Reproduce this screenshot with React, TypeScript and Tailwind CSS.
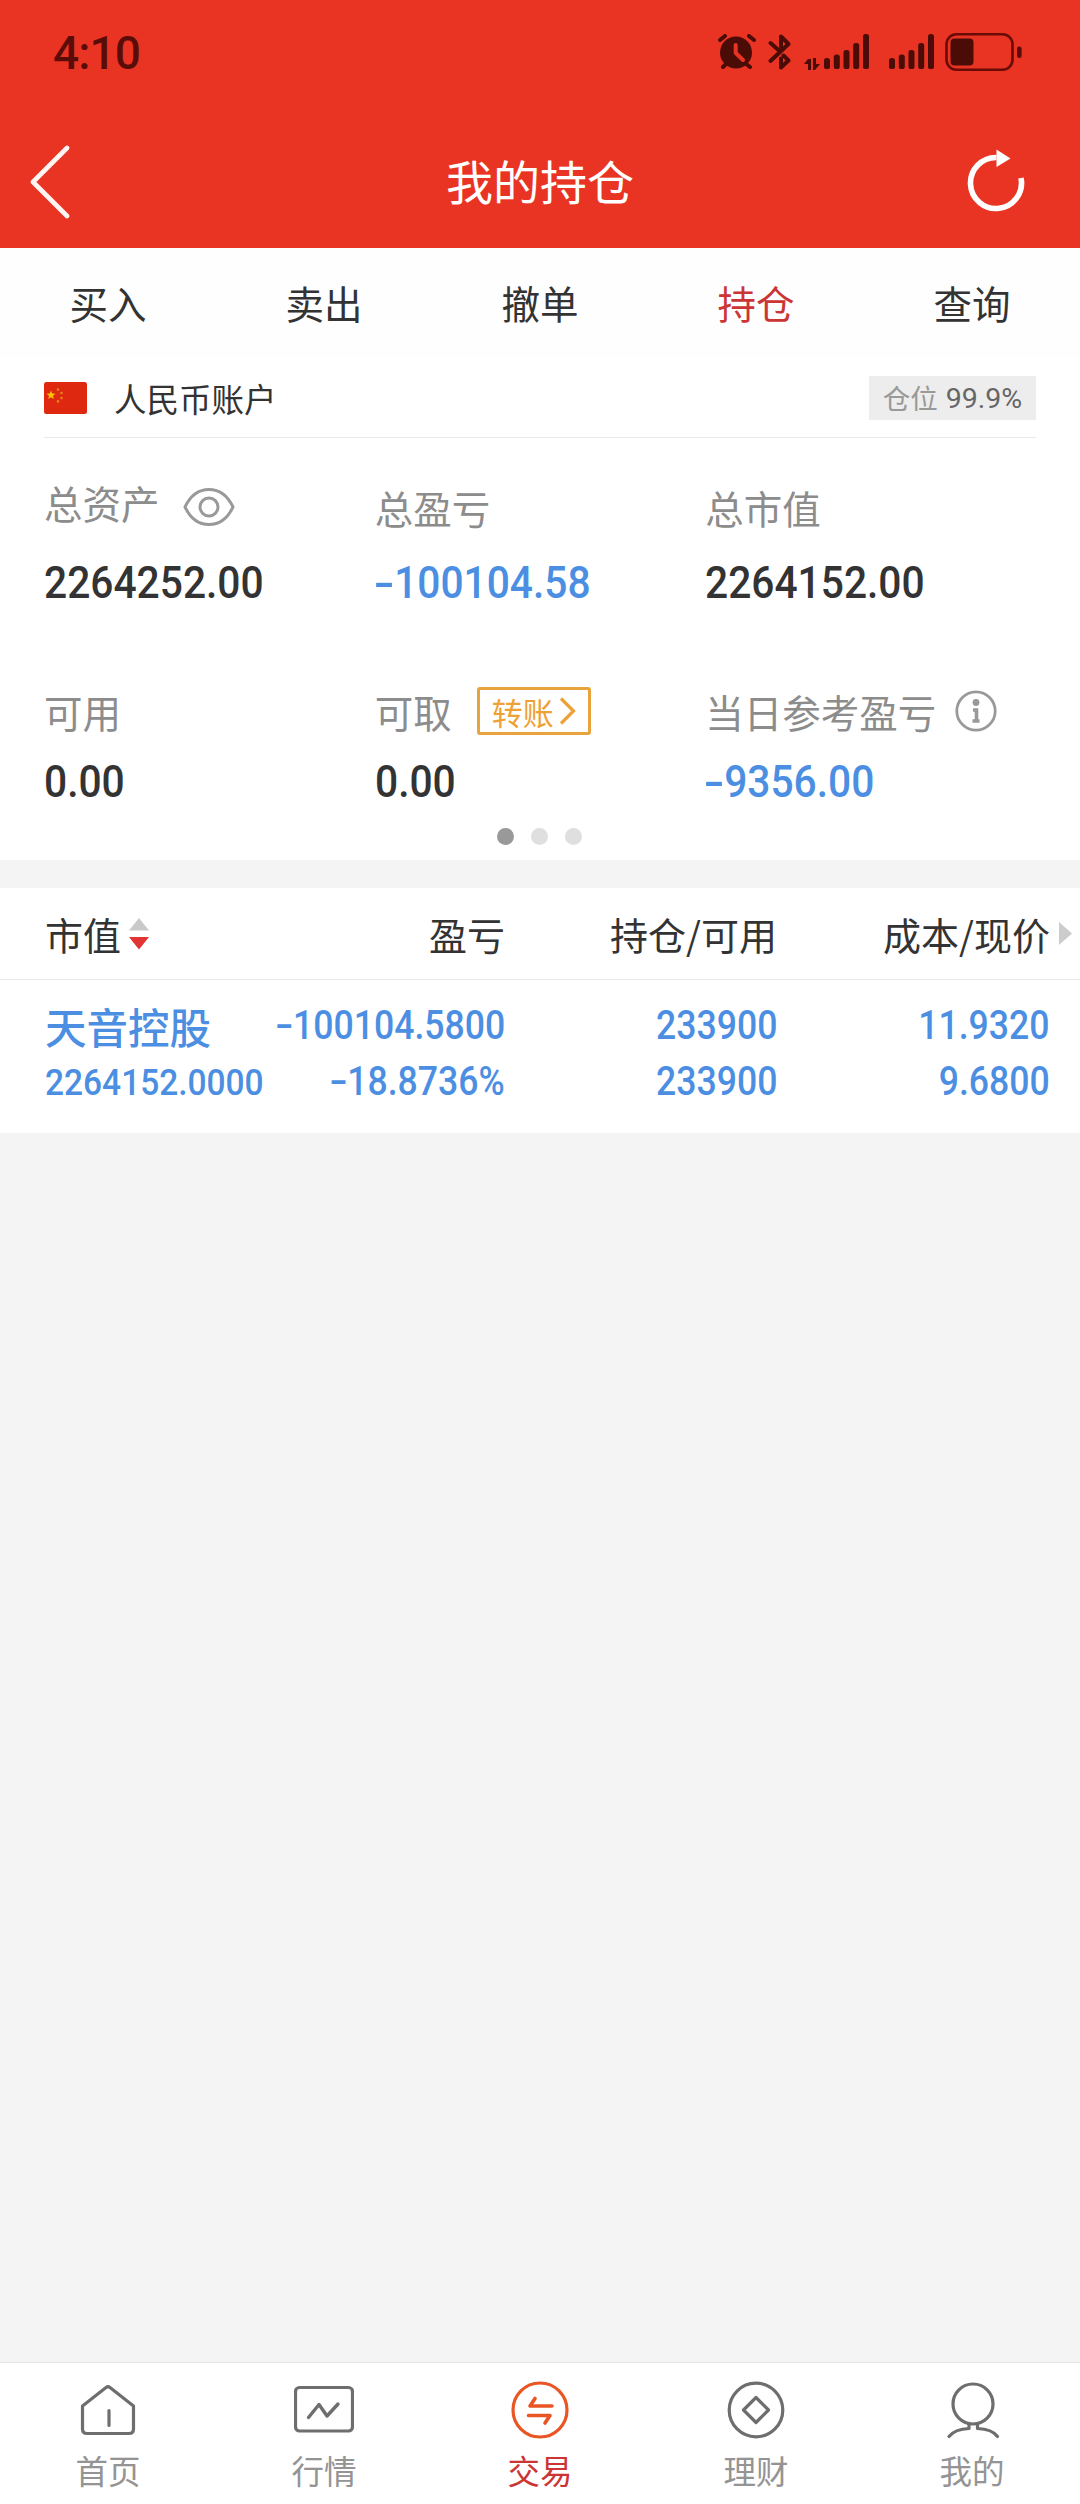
import clsx from "clsx";

const tabs = ["买入", "卖出", "撤单", "持仓", "查询"];

type NumProps = {
  value: string;
  align?: "left" | "right";
  className?: string;
};

// Figures are set slightly condensed, with a wider minus sign.
function Num({ value, align = "left", className }: NumProps) {
  const negative = value.startsWith("-");
  return (
    <span
      className={clsx(
        "inline-block whitespace-nowrap font-[Roboto] font-[550]",
        align === "left" ? "origin-left scale-x-[0.905]" : "origin-right scale-x-[0.89]",
        className
      )}
    >
      {negative && <span className="mr-[0.05em] inline-block origin-left translate-x-[-0.03em] scale-x-[1.5] pr-[0.08em]">-</span>}
      {negative ? value.slice(1) : value}
    </span>
  );
}

function SignalBars({ className }: { className?: string }) {
  return (
    <svg className={className} width="46" height="36" viewBox="0 0 46 36" fill="#4b0c08">
      <rect x="0" y="24" width="6" height="11" rx="2.6" />
      <rect x="9.8" y="20.5" width="6" height="14.5" rx="2.6" />
      <rect x="19.5" y="16" width="6" height="19" rx="2.6" />
      <rect x="29.2" y="9" width="6" height="26" rx="2.6" />
      <rect x="39" y="0" width="6" height="35" rx="2.6" />
    </svg>
  );
}

function StatusBar() {
  return (
    <div className="flex h-[104px] items-center justify-between pl-[53px] pr-[57px]">
      <span className="mt-px font-[Roboto] text-[46px] font-medium leading-none tracking-[-0.9px] text-[#5a0d08]">4:10</span>
      <div className="flex items-center">
        <svg width="38" height="36" viewBox="0 0 38 36" fill="none" strokeLinecap="round">
          <circle cx="18" cy="18.5" r="16" fill="#4b0c08" />
          <path d="M2 6 7 2M31 2l5 4M5 33l4-4M27 29l5 4" stroke="#4b0c08" strokeWidth="4" />
          <path d="M17.7 11v8l7.3 7" stroke="#e93423" strokeWidth="4" strokeLinejoin="round" />
        </svg>
        <svg className="ml-[12px]" width="23" height="38" viewBox="0 0 23 38" fill="none" stroke="#4b0c08" strokeWidth="4" strokeLinecap="round" strokeLinejoin="round">
          <path d="M2.500 10 11 17.500M2.500 28 20.500 11 13 3.500V14M13 25.500v9l7.500-7L15.500 22.500" />
        </svg>
        <svg className="ml-[13px] mt-6" width="16" height="12" viewBox="0 0 16 12" fill="#4b0c08">
          <path d="M4 1h3v11H4V6H0zM9 0h3v6h4l-5 6H9z" />
        </svg>
        <SignalBars className="ml-1" />
        <SignalBars className="ml-[19px]" />
        <svg className="ml-[9px]" width="79" height="40" viewBox="0 0 79 40">
          <rect x="2.5" y="2.2" width="66" height="35.6" rx="10" fill="none" stroke="#6a0b05" strokeWidth="2.6" />
          <rect x="6.5" y="6.5" width="23" height="27" rx="4" fill="#4b0c08" />
          <rect x="73" y="14.5" width="4.6" height="11.5" rx="2.2" fill="#5a0d08" />
        </svg>
      </div>
    </div>
  );
}

function TitleBar() {
  return (
    <div className="flex h-36 items-start justify-between pl-[30px] pr-[54px]">
      <svg className="mt-10" width="40" height="76" viewBox="0 0 40 76" fill="none" stroke="#fff6f4" strokeWidth="4.6" strokeLinecap="round" strokeLinejoin="round">
        <path d="M37 4 3 38l34 34" />
      </svg>
      <h1 className="ml-[44px] mt-[41px] text-[47px] leading-[70px] text-white">我的持仓</h1>
      <svg className="mt-[42px]" width="60" height="72" viewBox="0 0 60 72" fill="none">
        <path d="M30.5 11.5A25.5 25.5 0 1 0 55 32" stroke="#fff" strokeWidth="5.6" />
        <path d="M30.5 3.5 44.5 12.5 30.5 21z" fill="#fff" />
      </svg>
    </div>
  );
}

function ChinaFlag() {
  return (
    <svg width="43" height="32" viewBox="0 0 43 32">
      <rect width="43" height="32" rx="2.5" fill="#de2910" />
      <path d="M7 8.5 8.2 11.6 11.5 11.8 8.9 13.8 9.8 17 7 15.2 4.2 17 5.1 13.8 2.5 11.8 5.8 11.6z" fill="#ffc400" />
      <g fill="#e5801d">
        <circle cx="14" cy="7.6" r="1.3" />
        <circle cx="17.5" cy="11" r="1.3" />
        <circle cx="17.5" cy="16" r="1.3" />
        <circle cx="14" cy="19.4" r="1.3" />
      </g>
    </svg>
  );
}

function AccountSummary() {
  return (
    <section className="h-[502px] bg-white px-11">
      <div className="flex h-20 items-center justify-between border-b border-[#e9e9e9] pt-px">
        <div className="flex items-center">
          <ChinaFlag />
          <span className="ml-[27px] text-[32.5px] leading-10 text-[#333]">人民币账户</span>
        </div>
        <div className="flex h-11 w-[167px] items-center justify-center bg-[#ededed] leading-none">
          <span className="text-[27.5px] text-[#999]">仓位</span>
          <span className="ml-2 mt-[3px] font-[Roboto] text-[28.5px] text-[#666]">99.9%</span>
        </div>
      </div>

      <div className="grid grid-cols-3 pt-[37px] text-[38.5px] text-[#8c8c8c]">
        <div>
          <div className="flex h-16 items-center">
            <span className="-mt-[10px] leading-[50px]">总资产</span>
            <svg className="ml-[23px]" width="52" height="40" viewBox="0 0 52 40" fill="none" stroke="#999" strokeWidth="3">
              <path d="M2 20C7 9.5 15 2.5 26 2.5S45 9.5 50 20C45 30.5 37 37.5 26 37.5S7 30.5 2 20z" strokeLinejoin="round" />
              <circle cx="26" cy="20" r="9" />
            </svg>
          </div>
          <Num value="2264252.00" className="mt-3 text-[45px] leading-[64px] text-[#333]" />
        </div>
        <div>
          <div className="flex h-16 items-center leading-[50px]">总盈亏</div>
          <Num value="-100104.58" className="mt-3 text-[45px] leading-[64px] text-[#4c8fe2]" />
        </div>
        <div>
          <div className="flex h-16 items-center leading-[50px]">总市值</div>
          <Num value="2264152.00" className="mt-3 text-[45px] leading-[64px] text-[#333]" />
        </div>
      </div>

      <div className="mt-[64px] grid grid-cols-3 text-[38.5px] text-[#8c8c8c]">
        <div>
          <div className="flex h-16 items-center leading-[50px]">可用</div>
          <Num value="0.00" className="mt-[7px] text-[45px] leading-[64px] text-[#333]" />
        </div>
        <div>
          <div className="flex h-16 items-center leading-[50px]">
            可取
            <button className="ml-[25px] flex h-12 w-[114px] items-center rounded-[3px] border-[3px] border-[#e8a33d] pl-3 text-[31px] leading-none text-[#eea236]">
              转账
              <svg className="ml-[5px]" width="17" height="30" viewBox="0 0 17 30" fill="none" stroke="#eea236" strokeWidth="3.2">
                <path d="M2 2.5 14.5 15 2 27.5" />
              </svg>
            </button>
          </div>
          <Num value="0.00" className="mt-[7px] text-[45px] leading-[64px] text-[#333]" />
        </div>
        <div>
          <div className="flex h-16 items-center whitespace-nowrap leading-[50px]">
            当日参考盈亏
            <svg className="ml-[19px]" width="42" height="42" viewBox="0 0 42 42" fill="none" stroke="#999">
              <circle cx="21" cy="21" r="19.2" strokeWidth="2.8" />
              <circle cx="21" cy="12.5" r="3.4" fill="#999" stroke="none" />
              <path d="M18 20h3.5v11M17.5 31h7" strokeWidth="3.6" />
            </svg>
          </div>
          <Num value="-9356.00" className="mt-[7px] text-[45px] leading-[64px] text-[#4c8fe2]" />
        </div>
      </div>

      <div className="mt-[14px] flex justify-center gap-[17px] pr-[2px]">
        <span className="size-[17px] rounded-full bg-[#999]" />
        <span className="size-[17px] rounded-full bg-[#dfdfdf]" />
        <span className="size-[17px] rounded-full bg-[#dfdfdf]" />
      </div>
    </section>
  );
}

function Holdings() {
  return (
    <section className="mt-7 h-[245px] bg-white">
      <div className="grid h-[92px] grid-cols-[505px_272px_273px_30px] items-center border-b border-[#e9e9e9] text-[38px] text-[#333]">
        <div className="flex items-center justify-between pl-[45px]">
          <span className="flex items-center">
            市值
            <svg className="ml-2" width="20" height="32" viewBox="0 0 20 32">
              <path d="M10 0 20 12.5H0z" fill="#c9c9c9" />
              <path d="M0 19h20L10 31.5z" fill="#e33434" />
            </svg>
          </span>
          <span>盈亏</span>
        </div>
        <span className="text-right">持仓/可用</span>
        <span className="text-right">成本/现价</span>
        <svg className="ml-[9px]" width="13" height="23" viewBox="0 0 13 23">
          <path d="M0 0 13 11.5 0 23z" fill="#ccc" />
        </svg>
      </div>

      <div className="grid grid-cols-[505px_272px_273px] pt-[18px] text-[40px] leading-[56px] text-[#4c8fe2]">
        <div className="flex justify-between pl-[45px]">
          <div className="-mt-[2px] flex w-[180px] flex-col">
            <span className="text-[41.5px] font-medium leading-[60px]">天音控股</span>
            <Num value="2264152.0000" className="text-[37px] leading-[54px]" />
          </div>
          <div className="flex flex-col items-end">
            <Num value="-100104.5800" align="right" />
            <Num value="-18.8736%" align="right" />
          </div>
        </div>
        <div className="flex flex-col items-end">
          <Num value="233900" align="right" />
          <Num value="233900" align="right" />
        </div>
        <div className="flex flex-col items-end">
          <Num value="11.9320" align="right" />
          <Num value="9.6800" align="right" />
        </div>
      </div>
    </section>
  );
}

const navItems = [
  {
    label: "首页",
    icon: <path d="M4.5 27 28 8.500Q30 7 32 8.500L55.500 27V50Q55.500 54.500 51 54.500H9Q4.500 54.500 4.500 50zM31 31.500v15" />,
  },
  {
    label: "行情",
    icon: (
      <>
        <rect x="1.5" y="8.5" width="57" height="43.5" rx="4" />
        <path d="M14.5 38.5 25 25.5l8 11.500L44 25" strokeWidth="3.4" />
      </>
    ),
  },
  {
    label: "交易",
    icon: (
      <>
        <circle cx="30" cy="31" r="27" />
        <path d="M25 19.5 20 27h22M18.5 36.500H40l-5 7.500" strokeWidth="3.6" />
      </>
    ),
  },
  {
    label: "理财",
    icon: (
      <>
        <circle cx="30" cy="31" r="26.8" />
        <path d="M30 18.5 42.5 31 30 43.5 17.5 31z" />
      </>
    ),
  },
  {
    label: "我的",
    icon: (
      <>
        <circle cx="31" cy="25" r="20" />
        <path d="M27 45v4.500Q13 50 7 57.500M35.500 45v4.500Q50 50 55.500 57.500" />
      </>
    ),
  },
];

function BottomNav() {
  return (
    <nav className="mt-auto grid h-[142px] grid-cols-5 border-t border-[#e4e4e4] bg-white">
      {navItems.map((item) => {
        const active = item.label === "交易";
        return (
          <div key={item.label} className="flex flex-col items-center pt-4">
            <svg
              className={active ? "text-[#ea5524]" : "text-[#6e6e6e]"}
              width="60"
              height="62"
              viewBox="0 0 60 62"
              fill="none"
              stroke="currentColor"
              strokeWidth="3.2"
              strokeLinecap="round"
              strokeLinejoin="round"
            >
              {item.icon}
            </svg>
            <span className={clsx("mt-[9px] text-[32.5px] leading-10", active ? "text-[#cc3535]" : "text-[#949494]")}>
              {item.label}
            </span>
          </div>
        );
      })}
    </nav>
  );
}

export default function App() {
  return (
    <div className="flex h-[2504px] w-[1080px] flex-col overflow-hidden bg-[#f4f4f4] font-['Noto_Sans_CJK_SC',sans-serif]">
      <header className="h-[248px] bg-[#e93423]">
        <StatusBar />
        <TitleBar />
      </header>
      <div className="grid h-[110px] grid-cols-5 items-center bg-[#fefefe] text-center text-[38.5px]">
        {tabs.map((tab) => (
          <span key={tab} className={tab === "持仓" ? "text-[#cc3535]" : "text-[#333]"}>
            {tab}
          </span>
        ))}
      </div>
      <AccountSummary />
      <Holdings />
      <BottomNav />
    </div>
  );
}
